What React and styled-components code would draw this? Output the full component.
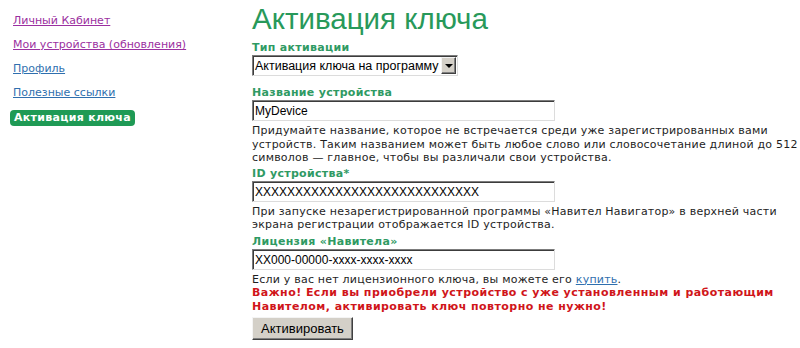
import styled, { createGlobalStyle } from 'styled-components';

const GlobalStyle = createGlobalStyle`
    body {
        margin: 0;
        background: #fff;
        font-family: 'DejaVu Sans', Verdana, sans-serif;
        font-size: 11px;
        color: #1e1e1e;
    }
`;

const Page = styled.div`
    display: flex;
    width: 800px;
    height: 348px;
    overflow: hidden;
`;

const Sidebar = styled.nav`
    width: 252px;
    flex-shrink: 0;
    padding: 14px 0 0 13px;
    box-sizing: border-box;
    display: flex;
    flex-direction: column;
    align-items: flex-start;
    gap: 10px;
`;

const NavLink = styled.a`
    font-size: 11px;
    line-height: 14px;
    color: ${(props) => (props.$visited ? '#9b30a0' : '#2f6fae')};
    text-decoration: underline;
    cursor: pointer;
`;

const ActiveItem = styled.span`
    margin: 0 0 0 -3px;
    padding: 1px 4px 1px 4px;
    background: #1f9a55;
    border-radius: 4px;
    color: #fff;
    font-weight: bold;
    font-size: 11px;
    line-height: 14px;
    letter-spacing: 0.3px;
`;

const Main = styled.main`
    display: flex;
    flex-direction: column;
    align-items: flex-start;
`;

const Title = styled.h1`
    margin: 0;
    font-family: 'Liberation Sans', Arial, sans-serif;
    font-weight: normal;
    font-size: 29.5px;
    line-height: 38px;
    color: #28995a;
`;

const Field = styled.div`
    display: flex;
    flex-direction: column;
    align-items: flex-start;
    margin-top: ${(props) => props.$top || '3px'};
`;

const Label = styled.label`
    font-weight: bold;
    font-size: 11px;
    line-height: 14px;
    color: #2f9a63;
    letter-spacing: 0.3px;
`;

const TextInput = styled.input`
    box-sizing: border-box;
    width: 303px;
    height: 21px;
    margin: 0;
    padding: 1px 2px 0;
    font-family: 'Liberation Sans', Arial, sans-serif;
    font-size: 12px;
    color: #000;
    background: #fff;
    border: 1px solid;
    border-color: #7c7c7c #dcdcdc #dcdcdc #7c7c7c;
    box-shadow: inset 1px 1px 0 #3c3c3c;
    outline: none;
`;

const SelectBox = styled.div`
    box-sizing: border-box;
    display: flex;
    align-items: center;
    width: 206px;
    height: 21px;
    margin-bottom: 10px;
    background: #fff;
    border: 1px solid;
    border-color: #7c7c7c #dcdcdc #dcdcdc #7c7c7c;
    box-shadow: inset 1px 1px 0 #3c3c3c;
    font-family: 'Liberation Sans', Arial, sans-serif;
    font-size: 12.5px;
    color: #000;
`;

const SelectValue = styled.span`
    flex: 1;
    padding-left: 2px;
    white-space: nowrap;
    overflow: hidden;
`;

const SelectArrow = styled.span`
    box-sizing: border-box;
    flex-shrink: 0;
    width: 15px;
    height: 17px;
    margin-right: 1px;
    display: flex;
    align-items: center;
    justify-content: center;
    background: #d4d0c8;
    border: 1px solid;
    border-color: #f4f4f4 #404040 #404040 #f4f4f4;
    box-shadow: inset -1px -1px 0 #808080;

    &::after {
        content: '';
        border-left: 4px solid transparent;
        border-right: 4px solid transparent;
        border-top: 4px solid #000;
    }
`;

const Help = styled.p`
    margin: ${(props) => (props.$alert ? '0' : '3px 0 0')};
    font-size: 11px;
    line-height: 13.5px;
    white-space: nowrap;
    letter-spacing: ${(props) => (props.$alert ? '0.45px' : '0.22px')};
    color: ${(props) => (props.$alert ? '#d0151a' : '#1e1e1e')};
    font-weight: ${(props) => (props.$alert ? 'bold' : 'normal')};
`;

const BuyLink = styled.a`
    color: #2f6fae;
    text-decoration: underline;
    cursor: pointer;
`;

const SubmitButton = styled.button`
    box-sizing: border-box;
    margin-top: 4px;
    width: 101px;
    height: 23px;
    padding: 0;
    font-family: 'Liberation Sans', Arial, sans-serif;
    font-size: 13px;
    color: #000;
    background: #d4d0c8;
    border: 1px solid;
    border-color: #f4f4f4 #404040 #404040 #f4f4f4;
    box-shadow: inset -1px -1px 0 #808080;
    cursor: pointer;
`;

export default function App() {
    return (
        <>
            <GlobalStyle />
            <Page>
                <Sidebar>
                    <NavLink $visited>Личный Кабинет</NavLink>
                    <NavLink $visited>Мои устройства (обновления)</NavLink>
                    <NavLink>Профиль</NavLink>
                    <NavLink>Полезные ссылки</NavLink>
                    <ActiveItem>Активация ключа</ActiveItem>
                </Sidebar>
                <Main>
                    <Title>Активация ключа</Title>
                    <Field>
                        <Label>Тип активации</Label>
                        <SelectBox>
                            <SelectValue>Активация ключа на программу</SelectValue>
                            <SelectArrow />
                        </SelectBox>
                    </Field>
                    <Field $top="0">
                        <Label>Название устройства</Label>
                        <TextInput defaultValue="MyDevice" />
                        <Help>
                            Придумайте название, которое не встречается среди уже зарегистрированных вами
                            <br />
                            устройств. Таким названием может быть любое слово или словосочетание длиной до 512
                            <br />
                            символов — главное, чтобы вы различали свои устройства.
                        </Help>
                    </Field>
                    <Field $top="2px">
                        <Label>ID устройства*</Label>
                        <TextInput defaultValue="XXXXXXXXXXXXXXXXXXXXXXXXXXXX" />
                        <Help>
                            При запуске незарегистрированной программы «Навител Навигатор» в верхней части
                            <br />
                            экрана регистрации отображается ID устройства.
                        </Help>
                    </Field>
                    <Field>
                        <Label>Лицензия «Навитела»</Label>
                        <TextInput defaultValue="XX000-00000-xxxx-xxxx-xxxx" />
                        <Help>
                            Если у вас нет лицензионного ключа, вы можете его <BuyLink>купить</BuyLink>.
                        </Help>
                        <Help $alert>
                            Важно! Если вы приобрели устройство с уже установленным и работающим
                            <br />
                            Навителом, активировать ключ повторно не нужно!
                        </Help>
                    </Field>
                    <SubmitButton>Активировать</SubmitButton>
                </Main>
            </Page>
        </>
    );
}
